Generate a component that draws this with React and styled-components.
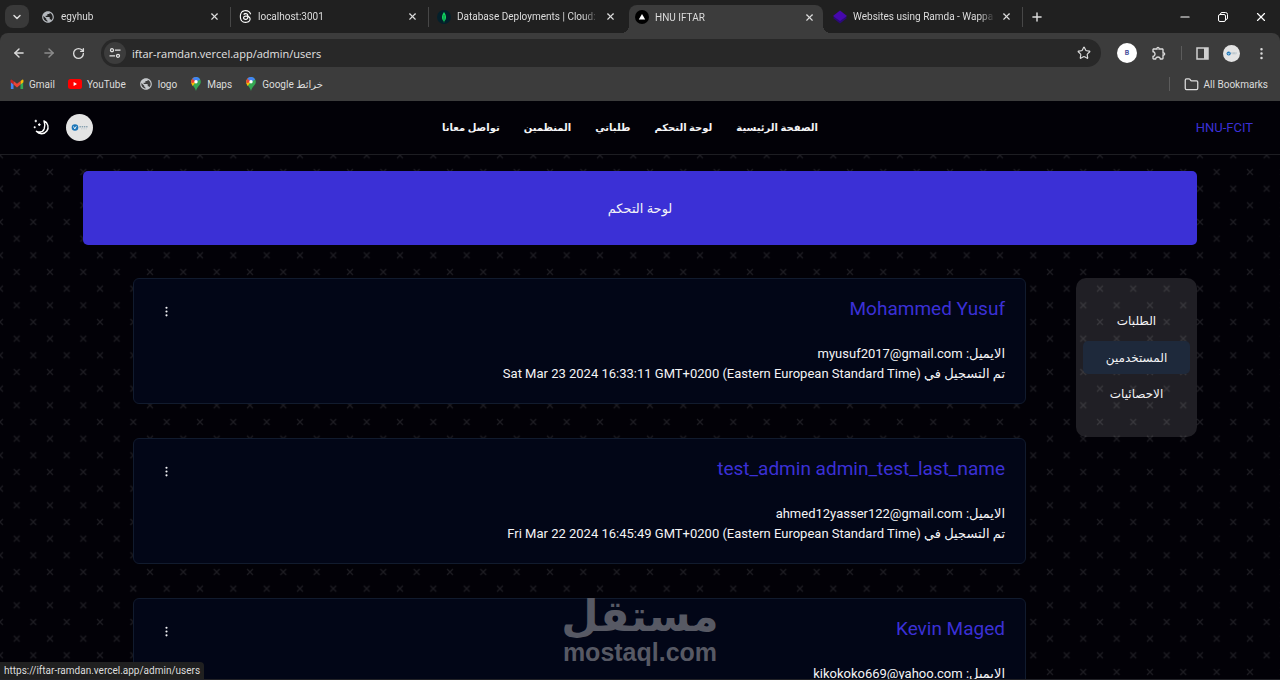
import React from 'react';
import styled, { createGlobalStyle } from 'styled-components';
import {
  ArrowLeft, ArrowRight, RotateCw, X, Plus, Star, ChevronDown, Minus, Folder, EllipsisVertical,
} from 'lucide-react';
import { SiThreads } from 'react-icons/si';
import { MdPublic, MdOutlineExtension } from 'react-icons/md';

const GlobalStyle = createGlobalStyle`
  * {
    box-sizing: border-box;
  }
  body {
    margin: 0;
    background: #020107;
  }
  button {
    appearance: none;
    border: none;
    background: none;
    padding: 0;
    color: inherit;
    font: inherit;
    cursor: pointer;
  }
  a {
    color: inherit;
    text-decoration: none;
  }
  svg {
    flex-shrink: 0;
  }
`;

const Window = styled.div`
  height: 100vh;
  display: flex;
  flex-direction: column;
  overflow: hidden;
  position: relative;
  border-bottom: 1px solid #222227;
  font-family: Roboto, "DejaVu Sans", sans-serif;
  font-size: 10px;
  color: #dcdcdc;
`;

/* browser tabs */
const TabStrip = styled.div`
  display: flex;
  align-items: center;
  height: 33px;
  padding: 0 12px 0 5px;
  background: #202020;
`;

const TabSearch = styled.button`
  display: flex;
  align-items: center;
  justify-content: center;
  width: 24px;
  height: 23px;
  margin-right: 4px;
  border-radius: 8px;
  background: #393939;
`;

const Tab = styled.div`
  display: flex;
  align-items: center;
  gap: 6px;
  flex: 0 1 198px;
  min-width: 0;
  height: 20px;
  padding: 0 10px 0 8px;
  border-right: 1px solid ${(props) => (props.$divider ? '#474747' : 'transparent')};
`;

const ActiveTab = styled(Tab)`
  position: relative;
  flex-basis: 194px;
  align-self: flex-end;
  height: 28px;
  margin: 0 2px;
  padding: 0 8px 4px 6px;
  border: none;
  border-radius: 8px 8px 0 0;
  background: #3c3c3c;

  &::before,
  &::after {
    content: "";
    position: absolute;
    bottom: 0;
    width: 8px;
    height: 8px;
  }
  &::before {
    right: 100%;
    background: radial-gradient(circle at 0 0, transparent 8px, #3c3c3c 8px);
  }
  &::after {
    left: 100%;
    background: radial-gradient(circle at 100% 0, transparent 8px, #3c3c3c 8px);
  }
`;

const TabTitle = styled.span`
  flex: 1;
  min-width: 0;
  overflow: hidden;
  white-space: nowrap;
  mask-image: linear-gradient(to left, transparent, #000 16px);
`;

const NewTab = styled.button`
  display: flex;
  margin-left: 7px;
`;

const WindowButtons = styled.div`
  display: flex;
  align-items: center;
  gap: 26px;
  margin-left: auto;
`;

/* address bar */
const ToolbarBack = styled.div`
  background: #202020;
`;

const Toolbar = styled.div`
  display: flex;
  align-items: center;
  gap: 16px;
  height: 40px;
  padding: 0 11px 0 12px;
  background: #3c3c3c;
  border-radius: 8px 8px 0 0;
`;

const IconButton = styled.button`
  display: flex;
  align-items: center;
  justify-content: center;
  opacity: ${(props) => (props.disabled ? 0.5 : 1)};
`;

const AddressBar = styled.div`
  display: flex;
  align-items: center;
  flex: 1;
  gap: 6px;
  height: 28px;
  padding: 0 10px 0 3px;
  border-radius: 14px;
  background: #282828;
`;

const SiteInfo = styled.button`
  display: flex;
  align-items: center;
  justify-content: center;
  width: 22px;
  height: 22px;
  border-radius: 50%;
  background: #3c3c3c;
`;

const AddressInput = styled.input`
  flex: 1;
  min-width: 0;
  border: none;
  outline: none;
  padding: 0;
  background: transparent;
  color: #e3e3e3;
  font-family: "Open Sans", sans-serif;
  font-size: 11px;
`;

const ToolbarActions = styled.div`
  display: flex;
  align-items: center;
  gap: 14px;
`;

const Extension = styled.span`
  display: flex;
  align-items: center;
  justify-content: center;
  width: 20px;
  height: 20px;
  border-radius: 50%;
  background: #fff;
  color: #4a4f9c;
  font-size: 7px;
  font-weight: 700;
`;

const Separator = styled.span`
  width: 1px;
  height: 14px;
  background: #5c5c5c;
`;

const Bookmarks = styled.div`
  display: flex;
  align-items: center;
  gap: 13px;
  height: 28px;
  padding: 0 12px 6px 10px;
  background: #3c3c3c;
`;

const Bookmark = styled.a`
  display: flex;
  align-items: center;
  gap: 5px;
`;

const BookmarksEnd = styled.div`
  display: flex;
  align-items: center;
  gap: 14px;
  margin-left: auto;
`;

/* web page */
const Page = styled.div`
  flex: 1;
  min-height: 0;
  overflow: hidden;
  position: relative;
  background: #020107;
  color: #f4f4f6;
  font-size: 13px;
`;

const PageBackground = styled.svg`
  position: absolute;
  inset: 0;
  width: 100%;
  height: 100%;
`;

const Header = styled.header`
  position: relative;
  display: grid;
  grid-template-columns: 1fr auto 1fr;
  align-items: center;
  height: 54px;
  padding: 0 27px 0 33px;
  background: #020107;
  border-bottom: 1px solid #1d1d22;
`;

const HeaderTools = styled.div`
  display: flex;
  align-items: center;
  gap: 16px;
`;

const Nav = styled.nav`
  display: flex;
  gap: 24px;
  margin-right: 26px;
  font-size: 10px;
  font-weight: 700;
  white-space: nowrap;
`;

const Brand = styled.a`
  justify-self: end;
  color: #3b30d6;
`;

const Content = styled.main`
  position: relative;
  padding: 16px 83px;
`;

const Banner = styled.h1`
  display: flex;
  align-items: center;
  justify-content: center;
  height: 74px;
  margin: 0 0 33px;
  border-radius: 5px;
  background: #3b30d6;
  font-size: 13px;
  font-weight: 400;
`;

const Columns = styled.div`
  display: flex;
  align-items: flex-start;
  gap: 50px;
  padding-left: 50px;
`;

const Sidebar = styled.aside`
  display: flex;
  flex-direction: column;
  gap: 3px;
  width: 121px;
  height: 159px;
  padding: 26px 7px;
  border-radius: 10px;
  background: rgba(255, 255, 255, 0.12);
`;

const SideLink = styled.a`
  display: flex;
  align-items: center;
  justify-content: center;
  height: 34px;
  border-radius: 5px;
  background: ${(props) => (props.$active ? '#1e293b' : 'transparent')};
  font-size: 12px;
`;

const UserList = styled.div`
  flex: 1;
  display: flex;
  flex-direction: column;
  gap: 34px;
`;

const UserCard = styled.article`
  display: flex;
  justify-content: space-between;
  align-items: flex-start;
  min-height: 126px;
  padding: 14px 20px 0 26px;
  border: 1px solid #111b2e;
  border-radius: 6px;
  background: #020617;
`;

const UserName = styled.h2`
  margin: 0 0 19px;
  color: #3b30d6;
  font-size: 19px;
  font-weight: 400;
  line-height: 32px;
`;

const UserLine = styled.p`
  margin: 0;
  line-height: 20px;
`;

const UserActions = styled(IconButton)`
  height: 36px;
`;

const StatusBar = styled.div`
  position: absolute;
  left: 0;
  bottom: 0;
  padding: 0 4px;
  line-height: 17px;
  border-radius: 0 4px 0 0;
  background: #202020;
`;

const Watermark = styled.div`
  position: absolute;
  left: 0;
  right: 0;
  bottom: 14px;
  display: flex;
  flex-direction: column;
  align-items: center;
  color: #575964;
  font-weight: 700;
  pointer-events: none;
`;

const WatermarkName = styled.span`
  font-family: "DejaVu Sans", sans-serif;
  font-size: 43px;
  line-height: 46px;
`;

const WatermarkSite = styled.span`
  font-family: "Liberation Sans", sans-serif;
  font-size: 25px;
  line-height: 26px;
`;

const LeafIcon = () => (
  <svg width="14" height="14" viewBox="0 0 14 14">
    <circle cx="7" cy="7" r="7" fill="#04202b" />
    <path d="M7 2C4 6 4.600 9.500 7 11.500 9.400 9.500 10 6 7 2z" fill="#10d563" />
    <path d="M7 5v7.500" stroke="#0a7a3c" strokeWidth="0.800" />
  </svg>
);

const TriangleIcon = () => (
  <svg width="14" height="14" viewBox="0 0 14 14">
    <circle cx="7" cy="7" r="7" fill="#000" />
    <path d="M7 4l3.200 5.500H3.800z" fill="#fff" />
  </svg>
);

const DiamondIcon = () => (
  <svg width="14" height="14" viewBox="0 0 14 14">
    <path d="M7 3l7 5-7 5.500L0 8z" fill="#2b0a78" />
    <path d="M7 .5l7 5.500-7 5L0 6z" fill="#4608ad" />
  </svg>
);

const GmailIcon = () => (
  <svg width="14" height="14" viewBox="0 0 24 24">
    <path d="M1.500 5v15.500h4.500V10z" fill="#4285f4" />
    <path d="M22.500 5v15.500H18V10z" fill="#34a853" />
    <path d="M18 7l3-2.500c1-.7 2 0 2 1.500v3l-5 4z" fill="#fbbc04" />
    <path d="M6 7l6 4.500L18 7v6l-6 4.800L6 13z" fill="#ea4335" />
    <path d="M6 7L3 4.500C2 3.800 1 4.500 1 6v3l5 4z" fill="#c5221f" />
  </svg>
);

const YouTubeIcon = () => (
  <svg width="14" height="14" viewBox="0 0 14 14">
    <rect x="0" y="2" width="14" height="10" rx="2.500" fill="#f00" />
    <path d="M5.600 5v4L9 7z" fill="#fff" />
  </svg>
);

const MapsIcon = () => (
  <svg width="12" height="14" viewBox="0 0 12 14">
    <path d="M6 0a4.800 4.800 0 0 1 4.800 4.800C10.800 8.500 7 9.500 6 14 5 9.500 1.200 8.500 1.200 4.800A4.800 4.800 0 0 1 6 0z" fill="#34a853" />
    <path d="M1.200 4.800C1.200 3.600 1.700 2.500 2.400 1.700L6 4.800 2.700 8.900C1.800 7.800 1.200 6.700 1.200 4.800z" fill="#fbbc04" />
    <path d="M2.400 1.700A4.800 4.800 0 0 1 4.500.3L6 4.800 1.500 6.200C1 4.500 1.400 2.700 2.400 1.700z" fill="#ea4335" />
    <path d="M4.500.3a4.800 4.800 0 0 1 5.700 2.200L6 4.800 2.400 1.700A5 5 0 0 1 4.500.3z" fill="#4285f4" />
    <circle cx="6" cy="4.800" r="1.700" fill="#fff" />
  </svg>
);

const TuneIcon = () => (
  <svg width="12" height="12" viewBox="0 0 12 12" fill="none" stroke="#e3e3e3" strokeWidth="1.300">
    <circle cx="3" cy="3.200" r="1.500" />
    <path d="M6 3.200h5.500M.5 8.800H6" />
    <circle cx="9" cy="8.800" r="1.500" />
  </svg>
);

const SidePanelIcon = () => (
  <svg width="13" height="13" viewBox="0 0 13 13">
    <rect x="1" y="1" width="11" height="11" fill="none" stroke="#d0d0d0" strokeWidth="1.500" />
    <rect x="8" y="1" width="4" height="11" fill="#d0d0d0" />
  </svg>
);

const RestoreIcon = () => (
  <svg width="10" height="10" viewBox="0 0 10 10" fill="none" stroke="#fff">
    <rect x="0.500" y="2.500" width="7" height="7" rx="1.500" />
    <path d="M2.500 2.500V2Q2.500.5 4 .5h3.500q2 0 2 2V6q0 1.500-1.500 1.500h-.5" />
  </svg>
);

const MoonIcon = () => (
  <svg width="17" height="17" viewBox="0 0 17 17" fill="none" stroke="#fff">
    <path
      d="M11 2a6.600 6.600 0 1 1-7.600 10.300c3.600 1.200 6.800.4 7.800-2.600.8-2.600.8-5.200-.2-7.700z"
      strokeWidth="1.400"
      strokeLinejoin="round"
    />
    <path d="M2.800.8v2.400M1.600 2h2.400M6.300 4.300v2.600M5 5.600h2.600M1.700 7.300v2M.7 8.300h2" strokeWidth="1.100" />
  </svg>
);

const Avatar = ({ size }) => (
  <svg width={size} height={size} viewBox="0 0 27 27">
    <circle cx="13.500" cy="13.500" r="13.500" fill="#e4e4e4" />
    <circle cx="9" cy="13.500" r="3.300" fill="#1b75b8" />
    <path d="M7.500 12.500l1.300 2.400 1.500-2.600" stroke="#fff" strokeWidth="0.900" fill="none" />
    <path d="M13.500 12.800h8" stroke="#5d8299" strokeWidth="1" strokeDasharray="1.400 0.800" />
    <path d="M15 14.800h6" stroke="#a9bcc8" strokeWidth="0.600" strokeDasharray="1 0.600" />
  </svg>
);

const tabs = [
  { title: 'egyhub', icon: <MdPublic size={14} color="#b4b8bd" />, divider: true },
  { title: 'localhost:3001', icon: <SiThreads size={13} color="#fff" />, divider: true },
  { title: 'Database Deployments | Cloud:', icon: <LeafIcon /> },
  { title: 'HNU IFTAR', icon: <TriangleIcon />, active: true },
  { title: 'Websites using Ramda - Wappa', icon: <DiamondIcon />, divider: true },
];

const bookmarks = [
  { title: 'Gmail', icon: <GmailIcon /> },
  { title: 'YouTube', icon: <YouTubeIcon /> },
  { title: 'logo', icon: <MdPublic size={14} color="#c4c7ca" /> },
  { title: 'Maps', icon: <MapsIcon /> },
  { title: 'Google خرائط', icon: <MapsIcon /> },
];

const navLinks = ['الصفحة الرئيسية', 'لوحة التحكم', 'طلباتي', 'المنظمين', 'تواصل معانا'];

const sideLinks = [
  { title: 'الطلبات' },
  { title: 'المستخدمين', active: true },
  { title: 'الاحصائيات' },
];

const users = [
  {
    name: 'Mohammed Yusuf',
    email: 'myusuf2017@gmail.com',
    date: 'Sat Mar 23 2024 16:33:11 GMT+0200 (Eastern European Standard Time)',
  },
  {
    name: 'test_admin admin_test_last_name',
    email: 'ahmed12yasser122@gmail.com',
    date: 'Fri Mar 22 2024 16:45:49 GMT+0200 (Eastern European Standard Time)',
  },
  {
    name: 'Kevin Maged',
    email: 'kikokoko669@yahoo.com',
  },
];

const App = () => {
  return (
    <>
      <GlobalStyle />
      <Window>
        <TabStrip>
          <TabSearch aria-label="Search tabs"><ChevronDown size={12} strokeWidth={3} /></TabSearch>
          {tabs.map((tab) => {
            const TabBox = tab.active ? ActiveTab : Tab;
            return (
              <TabBox key={tab.title} $divider={tab.divider}>
                {tab.icon}
                <TabTitle>{tab.title}</TabTitle>
                <IconButton aria-label="Close tab"><X size={11} strokeWidth={2.5} /></IconButton>
              </TabBox>
            );
          })}
          <NewTab aria-label="New tab"><Plus size={14} strokeWidth={2.5} /></NewTab>
          <WindowButtons>
            <IconButton aria-label="Minimize"><Minus size={14} color="#fff" /></IconButton>
            <IconButton aria-label="Restore"><RestoreIcon /></IconButton>
            <IconButton aria-label="Close"><X size={14} color="#fff" /></IconButton>
          </WindowButtons>
        </TabStrip>
        <ToolbarBack>
          <Toolbar>
            <IconButton aria-label="Back"><ArrowLeft size={14} strokeWidth={2.5} /></IconButton>
            <IconButton aria-label="Forward" disabled><ArrowRight size={14} strokeWidth={2.5} /></IconButton>
            <IconButton aria-label="Reload"><RotateCw size={13} strokeWidth={2.5} /></IconButton>
            <AddressBar>
              <SiteInfo aria-label="Site information"><TuneIcon /></SiteInfo>
              <AddressInput aria-label="Address" defaultValue="iftar-ramdan.vercel.app/admin/users" />
              <IconButton aria-label="Bookmark"><Star size={14} /></IconButton>
            </AddressBar>
            <ToolbarActions>
              <Extension>B</Extension>
              <IconButton aria-label="Extensions"><MdOutlineExtension size={16} /></IconButton>
              <Separator />
              <IconButton aria-label="Side panel"><SidePanelIcon /></IconButton>
              <IconButton aria-label="Profile"><Avatar size={17} /></IconButton>
              <IconButton aria-label="Menu"><EllipsisVertical size={15} strokeWidth={2} /></IconButton>
            </ToolbarActions>
          </Toolbar>
        </ToolbarBack>
        <Bookmarks>
          {bookmarks.map((item) => (
            <Bookmark key={item.title} href="#">{item.icon}{item.title}</Bookmark>
          ))}
          <BookmarksEnd>
            <Separator />
            <Bookmark href="#"><Folder size={15} />All Bookmarks</Bookmark>
          </BookmarksEnd>
        </Bookmarks>

        <Page>
          <PageBackground aria-hidden="true">
            <defs>
              <pattern id="crosses" width="40" height="40" patternUnits="userSpaceOnUse" patternTransform="translate(0 21) scale(0.8333)">
                <path
                  d="M16.500 16.500l7 7M23.500 16.500l-7 7M0 0l3.500 3.500M40 40l-3.500-3.500M40 0l-3.500 3.500M0 40l3.500-3.500"
                  stroke="#1d1c22"
                  strokeWidth="1.500"
                />
              </pattern>
            </defs>
            <rect width="100%" height="100%" fill="url(#crosses)" />
          </PageBackground>
          <Header>
            <HeaderTools>
              <IconButton aria-label="Dark mode"><MoonIcon /></IconButton>
              <IconButton aria-label="Account"><Avatar size={27} /></IconButton>
            </HeaderTools>
            <Nav dir="rtl">
              {navLinks.map((link) => <a key={link} href="#">{link}</a>)}
            </Nav>
            <Brand href="#">HNU-FCIT</Brand>
          </Header>
          <Content dir="rtl">
            <Banner>لوحة التحكم</Banner>
            <Columns>
              <Sidebar>
                {sideLinks.map((link) => (
                  <SideLink key={link.title} href="#" $active={link.active}>{link.title}</SideLink>
                ))}
              </Sidebar>
              <UserList>
                {users.map((user) => (
                  <UserCard key={user.email}>
                    <div>
                      <UserName>{user.name}</UserName>
                      <UserLine>الايميل: {user.email}</UserLine>
                      {user.date && <UserLine>تم التسجيل في <bdi>{user.date}</bdi></UserLine>}
                    </div>
                    <UserActions aria-label="User actions"><EllipsisVertical size={13} /></UserActions>
                  </UserCard>
                ))}
              </UserList>
            </Columns>
          </Content>
        </Page>

        <StatusBar>https://iftar-ramdan.vercel.app/admin/users</StatusBar>
        <Watermark>
          <WatermarkName>مستقل</WatermarkName>
          <WatermarkSite>mostaql.com</WatermarkSite>
        </Watermark>
      </Window>
    </>
  );
};

export default App;
